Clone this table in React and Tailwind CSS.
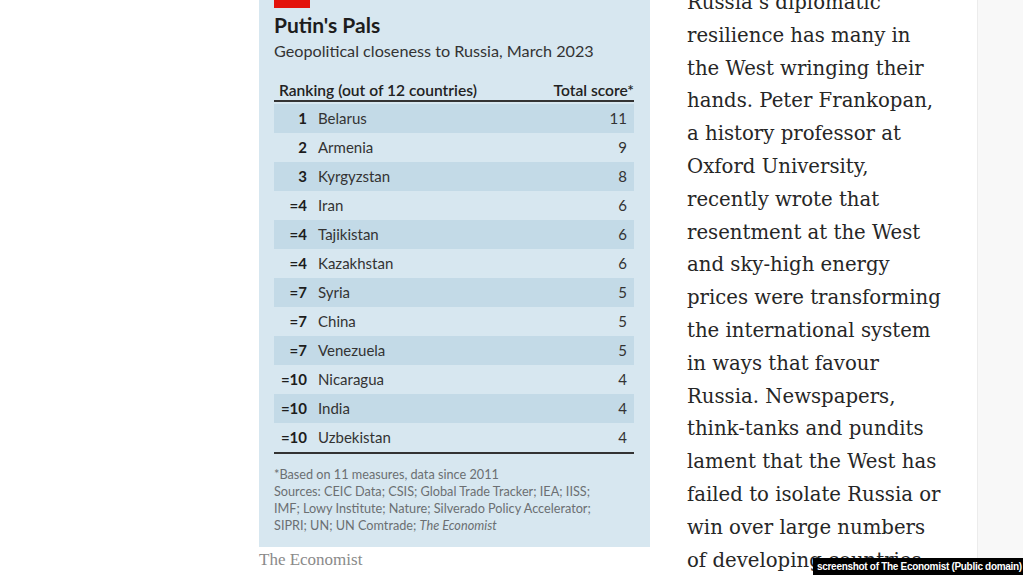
import React from 'react';

const ROWS = [
  ['1', 'Belarus', '11'],
  ['2', 'Armenia', '9'],
  ['3', 'Kyrgyzstan', '8'],
  ['=4', 'Iran', '6'],
  ['=4', 'Tajikistan', '6'],
  ['=4', 'Kazakhstan', '6'],
  ['=7', 'Syria', '5'],
  ['=7', 'China', '5'],
  ['=7', 'Venezuela', '5'],
  ['=10', 'Nicaragua', '4'],
  ['=10', 'India', '4'],
  ['=10', 'Uzbekistan', '4'],
];

const LINES = [
  "Russia\u2019s diplomatic",
  'resilience has many in',
  'the West wringing their',
  'hands. Peter Frankopan,',
  'a history professor at',
  'Oxford University,',
  'recently wrote that',
  'resentment at the West',
  'and sky-high energy',
  'prices were transforming',
  'the international system',
  'in ways that favour',
  'Russia. Newspapers,',
  'think-tanks and pundits',
  'lament that the West has',
  'failed to isolate Russia or',
  'win over large numbers',
  'of developing countries',
];

const sans = { fontFamily: 'Lato, "Open Sans", sans-serif' };

export default function App() {
  return (
    <div className="relative flex w-[1023px] h-[575px] overflow-hidden bg-white">
      <div className="w-[259px] shrink-0" />

      <div className="w-[391px] shrink-0 flex flex-col">
        <div className="h-[547px] bg-[#d7e7f0] pl-[15px] pr-[16px] text-[#1d1d1d]" style={sans}>
          <div className="w-[36px] h-[8px] bg-[#e3120b]" />
          <div className="mt-[5px] text-[21px] leading-[24px] font-bold">Putin's Pals</div>
          <div className="mt-[3px] text-[16.2px] leading-[22px] text-[#333]">Geopolitical closeness to Russia, March 2023</div>
          <div className="mt-[18px] flex justify-between border-b-2 border-[#333] pl-[5px] text-[15.6px] leading-[20px] font-semibold text-[#222]">
            <span>Ranking (out of 12 countries)</span>
            <span>Total score*</span>
          </div>
          <div className="mt-[2px] border-b-2 border-[#333]">
            {ROWS.map(([rank, name, score], i) => (
              <div
                key={name}
                className={`flex items-center h-[29px] text-[15px] ${i % 2 === 0 ? 'bg-[#c3dae7]' : ''}`}
              >
                <span className="w-[33px] text-right font-bold">{rank}</span>
                <span className="ml-[11px] flex-1 text-[#333]">{name}</span>
                <span className="pr-[7px] text-[#333]">{score}</span>
              </div>
            ))}
          </div>
          <div className="mt-[12px] text-[12.7px] leading-[17px] text-[#6b6f72]">
            <div>*Based on 11 measures, data since 2011</div>
            <div>Sources: CEIC Data; CSIS; Global Trade Tracker; IEA; IISS;</div>
            <div>IMF; Lowy Institute; Nature; Silverado Policy Accelerator;</div>
            <div>SIPRI; UN; UN Comtrade; <i>The Economist</i></div>
          </div>
        </div>
        <div
          className="mt-[4px] text-[17px] leading-[18px] text-[#8a8a8a]"
          style={{ fontFamily: '"Liberation Serif", serif' }}
        >
          The Economist
        </div>
      </div>

      <div className="flex-1 pl-[37px] -mt-[13px]">
        {LINES.map((l) => (
          <div
            key={l}
            className="text-[19.7px] leading-[32.8px] text-[#262626] whitespace-nowrap"
            style={{ fontFamily: '"DejaVu Serif", serif' }}
          >
            {l}
          </div>
        ))}
      </div>

      <div className="w-[46px] shrink-0 bg-[#f8f8f8] border-l border-[#ececec]" />

      <div className="absolute right-0 bottom-0 h-[17px] w-[210px] bg-black text-white text-[10px] tracking-[-0.3px] leading-[17px] font-bold pl-[4px] whitespace-nowrap overflow-hidden" style={{ fontFamily: '"Liberation Sans", Arial, sans-serif' }}>
        screenshot of The Economist (Public domain)
      </div>
    </div>
  );
}
